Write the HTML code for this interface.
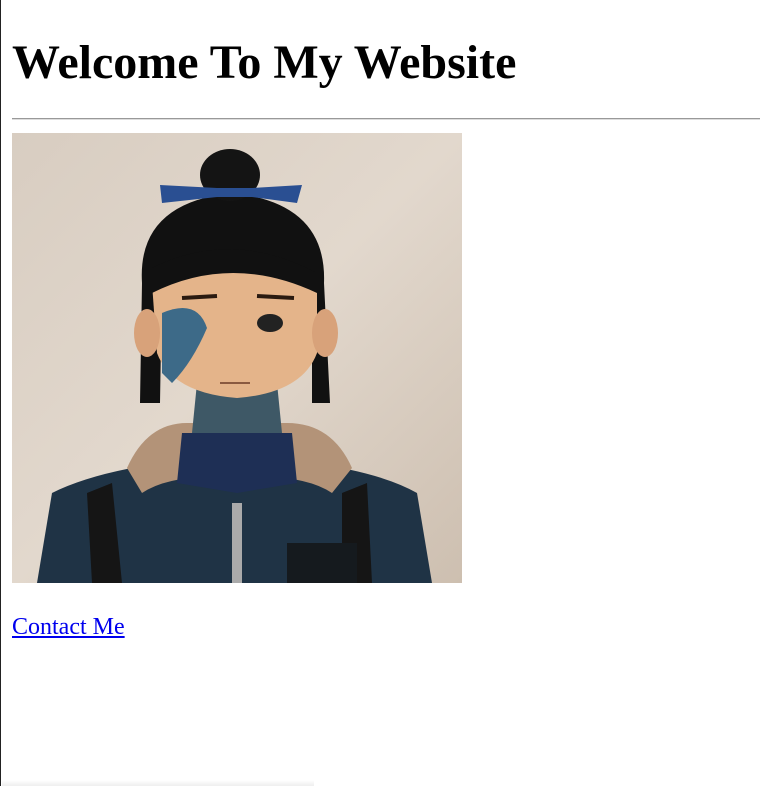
<!DOCTYPE html>
<html><head><style>
html,body{margin:0;padding:0;width:771px;height:786px;overflow:hidden;background:#fff;}
body{position:relative;font-family:"Liberation Serif",serif;}
.lb{position:absolute;left:0;top:0;width:1px;height:786px;background:#222;}
h1{position:absolute;left:12px;top:35px;margin:0;font-size:48px;font-weight:bold;line-height:56px;white-space:nowrap;}
.hr{position:absolute;left:12px;top:118px;width:748px;height:0;border-top:1px solid #999;border-bottom:1px solid #ddd;}
.img{position:absolute;left:12px;top:133px;width:450px;height:450px;}
a{position:absolute;left:12px;top:613px;font-size:24px;color:#0000ee;text-decoration:underline;line-height:28px;}
.sh{position:absolute;left:2px;top:780px;width:312px;height:6px;background:linear-gradient(#fff,#eee);}
</style></head><body>
<div class="lb"></div>
<h1>Welcome To My Website</h1>
<div class="hr"></div>
<svg class="img" viewBox="0 0 450 450" xmlns="http://www.w3.org/2000/svg">
<defs><linearGradient id="bg" x1="0" y1="0" x2="1" y2="1"><stop offset="0" stop-color="#d8cdc1"/><stop offset="0.5" stop-color="#e2d8cd"/><stop offset="1" stop-color="#cdbfb0"/></linearGradient></defs>
<rect width="450" height="450" fill="url(#bg)"/>
<path d="M25 450 L40 360 Q80 340 150 330 L300 330 Q370 340 405 360 L420 450Z" fill="#1f3345"/>
<path d="M115 335 Q135 290 175 290 L275 290 Q320 290 340 335 L320 360 Q290 340 225 345 Q160 340 130 360Z" fill="#b39378"/>
<path d="M170 300 L280 300 L285 350 L225 360 L165 350Z" fill="#1e2f55"/>
<path d="M185 250 L265 250 L270 300 L180 300Z" fill="#3e5866"/>
<path d="M130 150 Q125 70 220 60 Q315 70 312 150 L318 270 L300 270 L300 150 L150 150 L148 270 L128 270Z" fill="#111"/>
<ellipse cx="218" cy="42" rx="30" ry="26" fill="#141414"/>
<path d="M148 52 L205 55 L240 55 L290 52 L285 70 L240 64 L205 64 L150 70Z" fill="#2a4f92"/>
<path d="M140 150 Q150 125 225 125 Q300 125 305 150 L305 220 Q290 260 225 265 Q160 260 145 220Z" fill="#e4b48a"/>
<path d="M140 135 Q220 95 305 140 L305 160 Q220 120 140 160Z" fill="#111"/>
<ellipse cx="135" cy="200" rx="13" ry="24" fill="#d8a27a"/>
<ellipse cx="313" cy="200" rx="13" ry="24" fill="#d8a27a"/>
<path d="M150 180 Q185 165 195 195 Q180 230 160 250 L150 240Z" fill="#3d6a88"/>
<ellipse cx="258" cy="190" rx="13" ry="9" fill="#222"/>
<path d="M170 165 L205 163" stroke="#2a1a10" stroke-width="4"/>
<path d="M245 163 L282 165" stroke="#2a1a10" stroke-width="4"/>
<path d="M208 250 L238 250" stroke="#8a5a40" stroke-width="2"/>
<path d="M75 360 L100 350 L110 450 L80 450Z" fill="#151515"/>
<path d="M330 360 L355 350 L360 450 L330 450Z" fill="#151515"/>
<rect x="275" y="410" width="70" height="40" fill="#151a1e"/>
<path d="M220 370 L230 370 L230 450 L220 450Z" fill="#aaa"/>
</svg>
<a href="#">Contact Me</a>
<div class="sh"></div>
</body></html>
